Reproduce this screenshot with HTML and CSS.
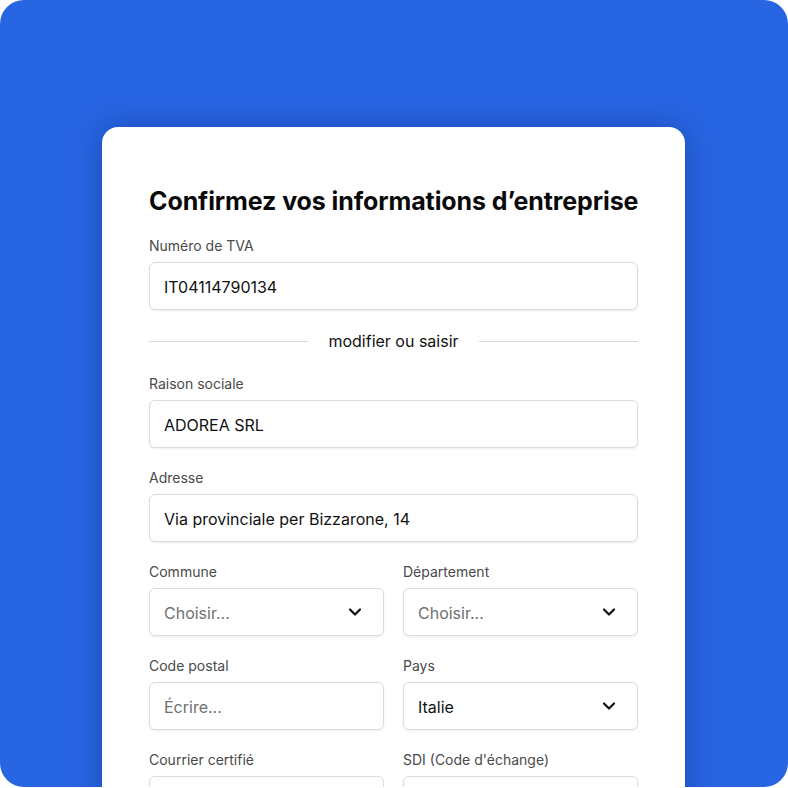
FILE: index.html
```html
<!DOCTYPE html>
<html lang="fr">
<head>
<meta charset="utf-8">
<title>Confirmez vos informations</title>
<link rel="stylesheet" href="styles.css">
</head>
<body>
<div class="stage">
  <div class="card">
    <h1 class="title">Confirmez vos informations d’entreprise</h1>

    <div class="field">
      <label class="label">Numéro de TVA</label>
      <div class="input"><span class="value">IT04114790134</span></div>
    </div>

    <div class="divider"><span class="line"></span><span class="divider-text">modifier ou saisir</span><span class="line"></span></div>

    <div class="field">
      <label class="label">Raison sociale</label>
      <div class="input"><span class="value">ADOREA SRL</span></div>
    </div>

    <div class="field">
      <label class="label">Adresse</label>
      <div class="input"><span class="value">Via provinciale per Bizzarone, 14</span></div>
    </div>

    <div class="row">
      <div class="field">
        <label class="label">Commune</label>
        <div class="input select"><span class="placeholder">Choisir...</span>
          <svg class="chev" viewBox="0 0 14 14" width="14" height="14"><path d="M2 4.5 L7 9.5 L12 4.5" fill="none" stroke="#111" stroke-width="2.2" stroke-linecap="round" stroke-linejoin="round"/></svg>
        </div>
      </div>
      <div class="field">
        <label class="label">Département</label>
        <div class="input select"><span class="placeholder">Choisir...</span>
          <svg class="chev" viewBox="0 0 14 14" width="14" height="14"><path d="M2 4.5 L7 9.5 L12 4.5" fill="none" stroke="#111" stroke-width="2.2" stroke-linecap="round" stroke-linejoin="round"/></svg>
        </div>
      </div>
    </div>

    <div class="row">
      <div class="field">
        <label class="label">Code postal</label>
        <div class="input"><span class="placeholder">Écrire...</span></div>
      </div>
      <div class="field">
        <label class="label">Pays</label>
        <div class="input select"><span class="value">Italie</span>
          <svg class="chev" viewBox="0 0 14 14" width="14" height="14"><path d="M2 4.5 L7 9.5 L12 4.5" fill="none" stroke="#111" stroke-width="2.2" stroke-linecap="round" stroke-linejoin="round"/></svg>
        </div>
      </div>
    </div>

    <div class="row">
      <div class="field">
        <label class="label">Courrier certifié</label>
        <div class="input"></div>
      </div>
      <div class="field">
        <label class="label">SDI (Code d'échange)</label>
        <div class="input"></div>
      </div>
    </div>
  </div>
</div>
</body>
</html>
```

FILE: styles.css
```css
* { box-sizing: border-box; }
html, body { margin: 0; padding: 0; background: #ffffff; }
body { font-family: Inter, "Liberation Sans", Arial, sans-serif; color: #111; }

.stage {
  width: 788px;
  height: 787px;
  background: #2865e3;
  border-radius: 24px;
  overflow: hidden;
  padding-top: 127px;
  padding-left: 102px;
}

.card {
  width: 583px;
  height: 700px;
  background: #fff;
  border-radius: 16px;
  padding: 59px 47px 0 47px;
  box-shadow: 0 0 30px rgba(10, 30, 90, 0.35);
}

.title {
  margin: 0 0 21px 0;
  font-size: 25px;
  line-height: 30px;
  font-weight: 700;
  letter-spacing: -0.1px;
  white-space: nowrap;
  color: #0a0a0a;
}

.field { display: flex; flex-direction: column; gap: 8px; margin-bottom: 21px; }
.row { display: grid; grid-template-columns: 1fr 1fr; column-gap: 19px; }

.label {
  font-size: 14px;
  line-height: 17px;
  color: #4a4a4a;
}

.input {
  height: 48px;
  border: 1px solid #dcdcdc;
  border-radius: 6px;
  background: #fff;
  box-shadow: 0 1px 2px rgba(0,0,0,0.08);
  display: flex;
  align-items: center;
  padding: 2px 14px 0 14px;
  font-size: 16px;
}
.select { justify-content: space-between; padding-right: 21px; }
.chev { display: block; margin-top: -2px; }
.value { color: #111; }
.placeholder { color: #707070; }

.divider {
  display: flex;
  align-items: center;
  gap: 20px;
  margin: 0 0 24px 0;
  height: 20px;
}
.line { flex: 1; height: 1px; background: #d8d8d8; }
.divider-text { font-size: 16px; color: #111; }
```
